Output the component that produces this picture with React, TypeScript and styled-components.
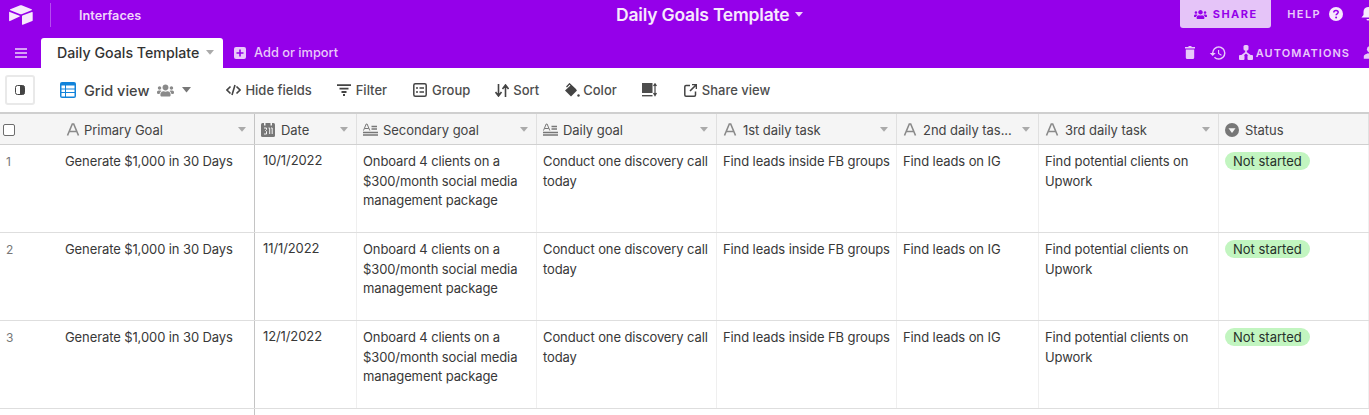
import styled, { createGlobalStyle } from "styled-components";
import { MdHistory, MdPeopleAlt } from "react-icons/md";
import { FaUsers } from "react-icons/fa";

const PURPLE = "#9500ea";
const COLUMNS = "255px 102px 180px 180px 180px 142px 180px 1fr";

const GlobalStyle = createGlobalStyle`
  html, body {
    margin: 0;
    padding: 0;
    background: #fff;
    overflow: hidden;
  }
  body {
    font-family: Inter, "Liberation Sans", sans-serif;
    color: #333;
    -webkit-font-smoothing: antialiased;
  }
`;

const Page = styled.div`
  width: 1369px;
  height: 415px;
  overflow: hidden;
`;

const Header = styled.header`
  background: ${PURPLE};
  height: 68px;
  display: flex;
  flex-direction: column;
  overflow: hidden;
`;

const TopRow = styled.div`
  height: 38px;
  display: grid;
  grid-template-columns: 616px auto 1fr;
`;

const Brand = styled.div`
  display: flex;
  align-items: center;
  height: 30px;
  padding-left: 9px;
`;

const Divider = styled.span`
  width: 1px;
  height: 24px;
  margin: 0 28px 0 17px;
  background: rgba(255, 255, 255, 0.3);
`;

const NavLink = styled.span`
  font-size: 12.7px;
  font-weight: 600;
  color: #f0d4fb;
`;

const BaseTitle = styled.div`
  display: flex;
  align-items: center;
  gap: 6px;
  height: 29px;
  font-size: 17.5px;
  font-weight: 600;
  letter-spacing: -0.2px;
  color: #f7e9fd;
`;

const TopActions = styled.div`
  display: flex;
  align-items: flex-start;
  justify-content: flex-end;
  margin-right: -6px;
`;

const ShareButton = styled.div`
  width: 91px;
  height: 28px;
  margin-right: 16px;
  display: flex;
  align-items: center;
  justify-content: center;
  gap: 6px;
  background: #e5c4f8;
  border-radius: 0 0 3px 3px;
  color: ${PURPLE};
  font-size: 11px;
  font-weight: 700;
  letter-spacing: 1.5px;
`;

const HelpLink = styled.span`
  height: 28px;
  display: flex;
  align-items: center;
  gap: 8px;
  margin-right: 18px;
  color: #e9c9fa;
  font-size: 11px;
  font-weight: 600;
  letter-spacing: 1.4px;
`;

const SubRow = styled.div`
  height: 30px;
  display: flex;
  align-items: stretch;
`;

const MenuButton = styled.div`
  width: 41px;
  display: flex;
  align-items: center;
  justify-content: center;
  padding-bottom: 1px;
  box-sizing: border-box;
`;

const TableTab = styled.div`
  width: 182px;
  box-sizing: border-box;
  padding: 0 9px 1px 16px;
  display: flex;
  align-items: center;
  justify-content: space-between;
  background: #fff;
  border-radius: 3px 3px 0 0;
  font-size: 14.2px;
  font-weight: 500;
  color: #333;
`;

const AddTable = styled.div`
  display: flex;
  align-items: center;
  gap: 8px;
  margin-left: 11px;
  padding-bottom: 1px;
  font-size: 12.8px;
  font-weight: 500;
  color: #e9c9fa;
`;

const SubActions = styled.div`
  margin-left: auto;
  display: flex;
  align-items: center;
  color: #e9c9fa;
  margin-right: -13px;
  padding-bottom: 1px;
`;

const TrashSlot = styled.span`
  display: flex;
  margin-right: 14px;
`;

const HistorySlot = styled.span`
  display: flex;
  margin-right: 12px;
`;

const AutomationLabel = styled.span`
  display: flex;
  align-items: center;
  gap: 3px;
  margin-right: 13px;
  font-size: 11px;
  font-weight: 600;
  letter-spacing: 1.05px;
`;

const Toolbar = styled.div`
  height: 44px;
  display: flex;
  align-items: center;
  color: #4a4a4a;
`;

const SidebarToggle = styled.div`
  width: 26px;
  height: 26px;
  margin-left: 5px;
  display: flex;
  align-items: center;
  justify-content: center;
  border: 2px solid #e9e9e9;
  border-radius: 3px;
`;

const ViewPicker = styled.div`
  display: flex;
  align-items: center;
  margin-left: 25px;
  margin-right: 35px;
  font-size: 14.5px;
  font-weight: 500;
  color: #444;
`;

const ViewName = styled.span`
  margin: 0 8px;
`;

const ViewCaret = styled.span`
  display: flex;
  margin-left: 8px;
`;

const ToolButton = styled.div<{ $space: number; $gap?: number }>`
  display: flex;
  align-items: center;
  gap: ${props => props.$gap ?? 5}px;
  margin-right: ${props => props.$space}px;
  font-size: 13px;
  font-weight: 500;
  color: #4d4d4d;
`;

const Grid = styled.div`
  border-top: 2px solid #cfcfcf;
`;

const HeaderCells = styled.div`
  height: 30px;
  display: grid;
  grid-template-columns: ${COLUMNS};
  background: #f5f5f5;
  border-bottom: 1px solid #d0d0d0;
`;

const HeadCell = styled.div<{ $strong?: boolean }>`
  min-width: 0;
  display: flex;
  align-items: center;
  gap: 6px;
  padding: 1px 8px 0 6px;
  border-right: 1px solid ${props => (props.$strong ? "#c4c4c4" : "#e0e0e0")};
  font-size: 13px;
  letter-spacing: -0.05px;
  color: #444;
`;

const LeadHead = styled(HeadCell)`
  gap: 4px;
  padding-left: 3px;
`;

const HeadCheck = styled.span`
  width: 10px;
  height: 10px;
  margin-right: 47px;
  border: 1px solid #6d6d6d;
  border-radius: 2px;
  background: #fff;
  flex: none;
`;

const HeadName = styled.span`
  flex: 1;
  white-space: nowrap;
`;

const Row = styled.div`
  height: 87px;
  display: grid;
  grid-template-columns: ${COLUMNS};
  border-bottom: 1px solid #dedede;
`;

const Cell = styled.div<{ $strong?: boolean }>`
  min-width: 0;
  padding: 7px 2px 0 6px;
  border-right: 1px solid ${props => (props.$strong ? "#c4c4c4" : "#efefef")};
  font-size: 13px;
  line-height: 19.5px;
  letter-spacing: -0.1px;
  color: #383838;
`;

const LeadCell = styled(Cell)`
  display: flex;
`;

const RowNumber = styled.span`
  width: 59px;
  font-size: 12px;
  color: #777;
`;

const DateCell = styled(Cell)`
  padding-left: 8px;
  line-height: 17px;
`;

const Pill = styled.span`
  display: inline-block;
  height: 18px;
  line-height: 18px;
  padding: 0 8px;
  border-radius: 9px;
  background: #c2f5c0;
  color: #26302a;
  letter-spacing: 0;
  white-space: nowrap;
`;

const Tail = styled.div`
  width: 254px;
  height: 7px;
  border-right: 1px solid #c4c4c4;
`;

const Caret = ({ color = "#fff", size = 8 }: { color?: string; size?: number }) => (
  <svg width={size} height={size * 0.6} viewBox="0 0 10 6" style={{ flex: "none" }}>
    <path d="M0 0h10L5 6z" fill={color} />
  </svg>
);

const Logo = () => (
  <svg width="24" height="20" viewBox="0 0 24 20">
    <path d="M10.6.4 1.3 4.2c-.5.2-.5.9 0 1.1l9.4 3.7c.8.3 1.7.3 2.5 0l9.4-3.7c.5-.2.5-.9 0-1.1L13.2.4c-.8-.3-1.8-.3-2.6 0z" fill="#f7e9fd" />
    <path d="M13 11.2v8c0 .4.4.7.8.5l9.5-3.7c.3-.1.4-.4.4-.6V7.5c0-.4-.4-.7-.8-.5l-9.500 3.600c-.2.100-.4.300-.4.600z" fill="#f7e9fd" />
    <path d="M10.700 11.500 1 16.100c-.4.200-.9-.100-.9-.500V7.300c0-.2.100-.3.200-.4.100-.100.300-.100.500 0l9.800 3.900c.4.100.4.500.1.700z" fill="#f7e9fd" />
  </svg>
);

const TextTypeIcon = () => (
  <svg width="14" height="13" viewBox="0 0 14 13" style={{ flex: "none" }}>
    <path d="M1.500 12.500 6.300 1h1.400l4.800 11.500M3.500 8.500h7" fill="none" stroke="#8a8a8a" strokeWidth="1.600" />
  </svg>
);

const LongTextIcon = () => (
  <svg width="16" height="14" viewBox="0 0 16 14" style={{ flex: "none", marginRight: -2 }}>
    <path d="M.5 7.500 3.200 1h.9l2.700 6.500M1.600 5.500h4.100" fill="none" stroke="#777" strokeWidth="1" />
    <path d="M8.500 3.500H14M8.500 6H14M0 9.500h15M0 12h15" fill="none" stroke="#777" strokeWidth="1.300" />
  </svg>
);

const DateTypeIcon = () => (
  <svg width="14" height="14" viewBox="0 0 14 14" style={{ flex: "none" }}>
    <rect width="14" height="14" rx="1.500" fill="#777" />
    <rect x="3" y="0" width="1.500" height="2.500" fill="#f5f5f5" />
    <rect x="9.500" y="0" width="1.500" height="2.500" fill="#f5f5f5" />
    <path d="M3 5h2.500v1.500l-1 1 1 1V11H3M7.500 5h1.200v6M10 5h1.200v6" fill="none" stroke="#f5f5f5" strokeWidth="1" />
  </svg>
);

const SelectTypeIcon = () => (
  <svg width="14" height="14" viewBox="0 0 14 14" style={{ flex: "none" }}>
    <circle cx="7" cy="7" r="7" fill="#777" />
    <path d="M3.500 5.200h7L7 10z" fill="#f5f5f5" />
  </svg>
);

const HamburgerIcon = () => (
  <svg width="12" height="10" viewBox="0 0 12 10">
    <path d="M0 1h12M0 5h12M0 9h12" stroke="#efd3fb" strokeWidth="1.600" />
  </svg>
);

const PlusBoxIcon = () => (
  <svg width="12" height="12" viewBox="0 0 12 12">
    <rect width="12" height="12" rx="2" fill="#e9c9fa" />
    <path d="M6 2.500v7M2.500 6h7" stroke={PURPLE} strokeWidth="1.600" />
  </svg>
);

const HelpIcon = () => (
  <svg width="14" height="14" viewBox="0 0 14 14">
    <circle cx="7" cy="7" r="7" fill="#f7e9fd" />
    <path d="M4.800 5.400c0-1.300 1-2 2.200-2s2.200.7 2.200 1.900c0 1.500-2.100 1.500-2.100 3" fill="none" stroke={PURPLE} strokeWidth="1.500" />
    <circle cx="7.100" cy="10.500" r="1" fill={PURPLE} />
  </svg>
);

const BellIcon = () => (
  <svg width="14" height="16" viewBox="0 0 14 16" style={{ flex: "none", marginTop: 6 }}>
    <path d="M7 1c3 0 4.500 2.200 4.500 5v3l2 2.500H.5L2.500 9V6C2.500 3.200 4 1 7 1zM5.500 13h3a1.500 1.500 0 0 1-3 0z" fill="#f7e9fd" />
  </svg>
);

const TrashIcon = () => (
  <svg width="10" height="13" viewBox="0 0 10 13">
    <path d="M3.500 0h3v1H10v1.500H0V1h3.500zM.8 3.500h8.400V11.500c0 .8-.6 1.500-1.400 1.500H2.200C1.400 13 .8 12.300.8 11.500z" fill="#e9c9fa" />
  </svg>
);

const AutomationIcon = () => (
  <svg width="14" height="15" viewBox="0 0 14 15">
    <rect x="4.500" y="0" width="5" height="5.500" rx="1.500" fill="#e9c9fa" />
    <rect x="0" y="10" width="5.500" height="5" rx="1" fill="#e9c9fa" />
    <rect x="8.500" y="10" width="5.500" height="5" rx="1" fill="#e9c9fa" />
    <path d="M7 5v3M2.500 11 7 7.500l4.500 3.500" fill="none" stroke="#e9c9fa" strokeWidth="1.600" />
  </svg>
);

const PanelIcon = () => (
  <svg width="10" height="10" viewBox="0 0 10 10">
    <rect x=".5" y=".5" width="9" height="9" rx="2" fill="#fff" stroke="#444" />
    <path d="M5 .5h3a1.500 1.500 0 0 1 1.500 1.500v6A1.500 1.500 0 0 1 8 9.500H5z" fill="#444" />
  </svg>
);

const GridIcon = () => (
  <svg width="16" height="16" viewBox="0 0 16 16" style={{ flex: "none" }}>
    <rect width="16" height="16" rx="2" fill="#1283da" />
    <path d="M1.500 3.500h3.500v3H1.500zM6 3.500h8.500v3H6zM1.500 7.500h3.500v2.500H1.500zM6 7.500h8.500v2.500H6zM1.500 11h3.500v3.500H1.500zM6 11h8.500v3.500H6z" fill="#fff" />
  </svg>
);

const HideIcon = () => (
  <svg width="15" height="12" viewBox="0 0 15 12">
    <path d="M4.500 2.500 1 6l3.500 3.500M10.500 2.500 14 6l-3.500 3.500M9 1 6 11" fill="none" stroke="#444" strokeWidth="1.600" />
  </svg>
);

const FilterIcon = () => (
  <svg width="14" height="12" viewBox="0 0 14 12">
    <path d="M0 1.200h14M2.500 4.700h9M4.500 8h5M6 11h2" stroke="#444" strokeWidth="1.800" />
  </svg>
);

const GroupIcon = () => (
  <svg width="14" height="14" viewBox="0 0 14 14">
    <rect x=".8" y=".8" width="12.400" height="12.400" rx="1.500" fill="none" stroke="#444" strokeWidth="1.500" />
    <path d="M3 5h2M6.500 5H11M3 9h2M6.500 9H11" stroke="#444" strokeWidth="1.600" />
  </svg>
);

const SortIcon = () => (
  <svg width="14" height="13" viewBox="0 0 14 13">
    <path d="M3.500 0v11M.5 8l3 4 3-4M10.500 13V2M7.500 5l3-4 3 4" fill="none" stroke="#444" strokeWidth="1.600" />
  </svg>
);

const ColorIcon = () => (
  <svg width="16" height="15" viewBox="0 0 16 15">
    <path d="M7 2 13 7.500 7 13.500 1 7.500z" fill="#444" />
    <path d="M2.500 4 5.500.8 12 7" fill="none" stroke="#444" strokeWidth="1.300" />
    <circle cx="14.500" cy="12.500" r="1.200" fill="#444" />
  </svg>
);

const DensityIcon = () => (
  <svg width="15" height="14" viewBox="0 0 15 14">
    <rect width="10.500" height="10" fill="#4d4d4d" />
    <rect y="12" width="10.500" height="1.400" fill="#4d4d4d" />
    <path d="M13 1v11M11.500 3 13 .8 14.500 3M11.500 10l1.500 2.500 1.500-2.500" fill="none" stroke="#444" strokeWidth="1.200" />
  </svg>
);

const ShareViewIcon = () => (
  <svg width="13" height="13" viewBox="0 0 13 13">
    <path d="M6 1.500H2A1.200 1.200 0 0 0 .8 2.700v8.300A1.200 1.200 0 0 0 2 12.200h8.300a1.200 1.200 0 0 0 1.200-1.200V7.500" fill="none" stroke="#444" strokeWidth="1.500" />
    <path d="M8 .5h4.500V5M12 1 6 7" fill="none" stroke="#444" strokeWidth="1.600" />
  </svg>
);

type Column = {
  name: string;
  icon: React.ReactNode;
  menu?: boolean;
};

const columns: Column[] = [
  { name: "Date", icon: <DateTypeIcon />, menu: true },
  { name: "Secondary goal", icon: <LongTextIcon />, menu: true },
  { name: "Daily goal", icon: <LongTextIcon />, menu: true },
  { name: "1st daily task", icon: <TextTypeIcon />, menu: true },
  { name: "2nd daily tas...", icon: <TextTypeIcon />, menu: true },
  { name: "3rd daily task", icon: <TextTypeIcon />, menu: true },
  { name: "Status", icon: <SelectTypeIcon /> },
];

const dates = ["10/1/2022", "11/1/2022", "12/1/2022"];

export default function App() {
  return (
    <Page>
      <GlobalStyle />
      <Header>
        <TopRow>
          <Brand>
            <Logo />
            <Divider />
            <NavLink>Interfaces</NavLink>
          </Brand>
          <BaseTitle>
            Daily Goals Template <Caret size={8} color="#f0d4fb" />
          </BaseTitle>
          <TopActions>
            <ShareButton>
              <FaUsers size={13} />
              SHARE
            </ShareButton>
            <HelpLink>
              HELP
              <HelpIcon />
            </HelpLink>
            <BellIcon />
          </TopActions>
        </TopRow>
        <SubRow>
          <MenuButton>
            <HamburgerIcon />
          </MenuButton>
          <TableTab>
            Daily Goals Template
            <Caret size={8} color="#aaa" />
          </TableTab>
          <AddTable>
            <PlusBoxIcon />
            Add or import
          </AddTable>
          <SubActions>
            <TrashSlot>
              <TrashIcon />
            </TrashSlot>
            <HistorySlot>
              <MdHistory size={18} />
            </HistorySlot>
            <AutomationLabel>
              <AutomationIcon />
              AUTOMATIONS
            </AutomationLabel>
            <MdPeopleAlt size={19} />
          </SubActions>
        </SubRow>
      </Header>
      <Toolbar>
        <SidebarToggle>
          <PanelIcon />
        </SidebarToggle>
        <ViewPicker>
          <GridIcon />
          <ViewName>Grid view</ViewName>
          <FaUsers size={17} color="#8a8a8a" />
          <ViewCaret>
            <Caret size={9} color="#777" />
          </ViewCaret>
        </ViewPicker>
        <ToolButton $space={25} $gap={4}>
          <HideIcon />
          Hide fields
        </ToolButton>
        <ToolButton $space={26}>
          <FilterIcon />
          Filter
        </ToolButton>
        <ToolButton $space={25}>
          <GroupIcon />
          Group
        </ToolButton>
        <ToolButton $space={25} $gap={4}>
          <SortIcon />
          Sort
        </ToolButton>
        <ToolButton $space={25} $gap={3}>
          <ColorIcon />
          Color
        </ToolButton>
        <ToolButton $space={27}>
          <DensityIcon />
        </ToolButton>
        <ToolButton $space={0}>
          <ShareViewIcon />
          Share view
        </ToolButton>
      </Toolbar>
      <Grid>
        <HeaderCells>
          <LeadHead $strong>
            <HeadCheck />
            <TextTypeIcon />
            <HeadName>Primary Goal</HeadName>
            <Caret size={8} color="#aaa" />
          </LeadHead>
          {columns.map(column => (
            <HeadCell key={column.name}>
              {column.icon}
              <HeadName>{column.name}</HeadName>
              {column.menu && <Caret size={8} color="#aaa" />}
            </HeadCell>
          ))}
        </HeaderCells>
        {dates.map((date, index) => (
          <Row key={date}>
            <LeadCell $strong>
              <RowNumber>{index + 1}</RowNumber>
              Generate $1,000 in 30 Days
            </LeadCell>
            <DateCell>{date}</DateCell>
            <Cell>Onboard 4 clients on a $300/month social media management package</Cell>
            <Cell>Conduct one discovery call today</Cell>
            <Cell>Find leads inside FB groups</Cell>
            <Cell>Find leads on IG</Cell>
            <Cell>Find potential clients on Upwork</Cell>
            <Cell>
              <Pill>Not started</Pill>
            </Cell>
          </Row>
        ))}
        <Tail />
      </Grid>
    </Page>
  );
}
